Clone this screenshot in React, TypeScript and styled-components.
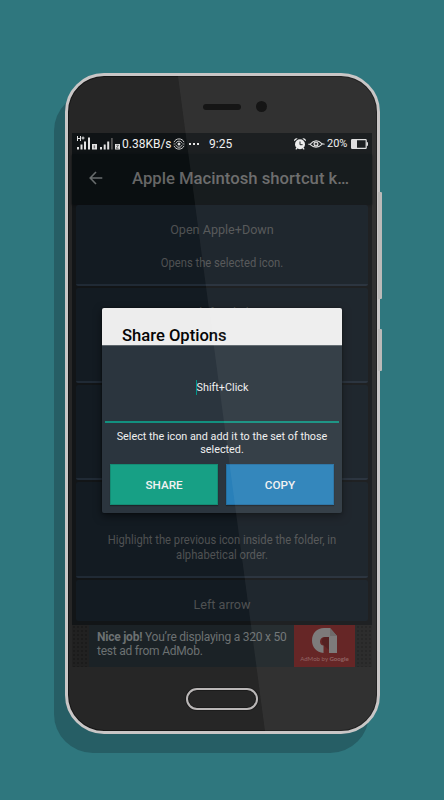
import React, {memo} from 'react';
import styled, {createGlobalStyle} from "styled-components";

type CardType = {
    id: number
    title: string
    text: string
    height: number
}

// cards 2-4 lie mostly behind the dialog
const cards: CardType[] = [
    {id: 1, title: 'Open Apple+Down', text: 'Opens the selected icon.', height: 81},
    {id: 2, title: 'Shift+Click', text: '', height: 95},
    {id: 3, title: '', text: '', height: 95},
    {id: 4, title: '', text: 'Highlight the previous icon inside the folder, in alphabetical order.', height: 96},
    {id: 5, title: 'Left arrow', text: '', height: 41},
]

export default function App() {
    return (
        <Scene>
            <GlobalStyle/>
            <Phone>
                <SideButton top={116} height={107}/>
                <SideButton top={253} height={42}/>
                <Earpiece>
                    <Speaker/>
                    <Camera/>
                </Earpiece>
                <Screen>
                    <StatusBar/>
                    <Toolbar>
                        <BackIcon/>
                        <ToolbarTitle>Apple Macintosh shortcut k…</ToolbarTitle>
                    </Toolbar>
                    <CardList>
                        {cards.map(el => <ShortcutCard key={el.id} {...el}/>)}
                    </CardList>
                    <AdBanner/>
                    <ShareDialog/>
                </Screen>
                <BottomBezel>
                    <HomeButton/>
                </BottomBezel>
                <Sheen/>
            </Phone>
        </Scene>
    );
}

const StatusBar = memo(() => (
    <Status>
        <SignalIcons/>
        <StatusText size={12} width={49}>0.38KB/s</StatusText>
        <HotspotIcon/>
        <Dots><i/><i/><i/></Dots>
        <Clock>9:25</Clock>
        <AlarmIcon/>
        <EyeIcon/>
        <StatusText size={11} width={23}>20%</StatusText>
        <BatteryIcon/>
    </Status>
))

const ShortcutCard = memo((props: CardType) => (
    <Card height={props.height}>
        <CardTitle>{props.title}</CardTitle>
        {props.text && <CardText>{props.text}</CardText>}
    </Card>
))

const ShareDialog = memo(() => (
    <Dialog>
        <DialogHeader>Share Options</DialogHeader>
        <DialogBody>
            <Field><Caret/>Shift+Click</Field>
            <DialogText>Select the icon and add it to the set of those selected.</DialogText>
            <Buttons>
                <Button color="#17a085">SHARE</Button>
                <Button color="#2980b9">COPY</Button>
            </Buttons>
        </DialogBody>
    </Dialog>
))

const AdBanner = memo(() => (
    <Ad>
        <AdText><b>Nice job!</b> You’re displaying a 320 x 50 test ad from AdMob.</AdText>
        <AdLogo>
            <svg width="25" height="25" viewBox="0 0 25 25">
                <path d="M17 9v13l-5.500-5C9 15 9.500 9 13 9z" fill="#4c1515"/>
                <path d="M12 0h6l7 8v17h-8V9h-4c-3 0-5 2-5 4.500 0 2.500 1.500 4 3.500 4V25C4.500 24.500 0 19 0 12.500 0 5 5 0 12 0z"
                      fill="#767474"/>
                <path d="M18 0l7 8h-7z" fill="#676363"/>
            </svg>
            <AdLabel>AdMob by <b>Google</b></AdLabel>
        </AdLogo>
    </Ad>
))

//=========================ICONS===================================

const SignalIcons = () => (
    <svg width="46" height="15" viewBox="0 0 46 15" fill="#e2e2e2">
        <path d="M1 0h1v2h2V0h1v5H4V3H2v2H1zM5.500 1.500h3v1h-3zM6.500 .5h1v3h-1z"/>
        <path d="M1 11h2v2.500H1zM4.500 8.500h2v5h-2zM8 5.500h2v8H8zM12 1.500h2v12h-2z"/>
        <path d="M16 8h5v5.500h-5z"/>
        <path d="M17.700 9.300h1.400v3h-1.400z" fill="#777"/>
        <path d="M24 11h2v2.500h-2zM27.700 8.500h2v5h-2zM31.200 5.500h2v8h-2z"/>
        <path d="M35 2h1.800v11.500H35z" fill="#555"/>
        <path d="M39 8h5v5.500h-5z"/>
        <path d="M40.300 9.300h2.200l-2.200 3h2.200" fill="none" stroke="#333" strokeWidth="0.7"/>
    </svg>
)

const HotspotIcon = () => (
    <HotspotSvg width="12" height="12" viewBox="0 0 12 12" fill="none" stroke="#c9c9c9">
        <path d="M1 4.200C2.500-.2 9.500-.2 11 4.200M3 5.200c.8-2.700 5.200-2.700 6 0M1 7.800c1.500 4.400 8.500 4.400 10 0M3 7.200c.8 2.700 5.200 2.700 6 0"/>
        <path d="M.5 6h2.200M9.300 6h2.200" strokeWidth="0.800"/>
        <circle cx="6" cy="6" r="1.500" fill="#dedede" stroke="none"/>
    </HotspotSvg>
)

const AlarmIcon = () => (
    <AlarmSvg width="12" height="12" viewBox="0 0 12 12">
        <g fill="#ececec">
            <circle cx="6" cy="6.300" r="5"/>
            <path d="M.2 3.300A2.400 2.400 0 0 1 3.700.6zM11.800 3.300A2.400 2.400 0 0 0 8.300.6zM2.500 9.500l1 1-1.300 1.200-.8-.6zM9.500 9.500l-1 1 1.300 1.200.8-.6z"/>
        </g>
        <path d="M6 3.500v3.200h2.600" fill="none" stroke="#1b1f21"/>
    </AlarmSvg>
)

const EyeIcon = () => (
    <EyeSvg width="17" height="8" viewBox="0 0 17 8" fill="none" stroke="#dfdfdf">
        <path d="M.3 4.300H2Q8-2.500 14 3.800L16.600 4.300M2 4.300Q8 10 14 4.300" strokeWidth="1.100"/>
        <circle cx="8" cy="4" r="1.900" strokeWidth="1.200"/>
        <circle cx="8" cy="4" r=".6" fill="#dfdfdf" stroke="none"/>
    </EyeSvg>
)

const BatteryIcon = () => (
    <BatterySvg width="17" height="10" viewBox="0 0 17 10">
        <rect x=".6" y=".6" width="14.600" height="8.800" rx=".6" fill="none" stroke="#dedede" strokeWidth="1.200"/>
        <path d="M1 1h5v8H1zM15.500 3.300H17v3.400h-1.500z" fill="#dedede"/>
    </BatterySvg>
)

const BackIcon = () => (
    <svg width="14" height="14" viewBox="0 0 14 14" fill="none" stroke="#686c6d" strokeWidth="1.600">
        <path d="M13.300 7H1.500M7 1L1.200 7 7 13"/>
    </svg>
)

//=========================PHONE===================================

const GlobalStyle = createGlobalStyle`
  body {
    margin: 0;
    background-color: #2f777e;
    font-family: Roboto, "Liberation Sans", sans-serif;
  }

  * {
    box-sizing: border-box;
  }
`

const Scene = styled.div`
  width: 444px;
  height: 800px;
  padding: 73px 0 0 65px;
  overflow: hidden;
  background-color: #2f777e;
`

const Phone = styled.div`
  position: relative;
  width: 315px;
  height: 661px;
  border: 3px solid #c9c6c6;
  border-radius: 39px;
  background-color: #262626;
  box-shadow: -11px 19px 0 #265e65, inset 0 0 0 1px #161616;
`

const SideButton = styled.div<{ top: number, height: number }>`
  position: absolute;
  left: 310px;
  top: ${props => props.top}px;
  width: 4px;
  height: ${props => props.height}px;
  border-radius: 0 1px 1px 0;
  background-color: #bcbab9;
`

const Earpiece = styled.div`
  display: flex;
  align-items: center;
  gap: 15px;
  height: 57px;
  padding: 4px 0 0 135px;
`

const Speaker = styled.div`
  width: 38px;
  height: 6px;
  border-radius: 3px;
  background-color: #080808;
`

const Camera = styled.div`
  width: 11px;
  height: 11px;
  border-radius: 50%;
  background-color: #080808;
`

const Screen = styled.div`
  position: relative;
  display: flex;
  flex-direction: column;
  width: 300px;
  height: 534px;
  margin-left: 4px;
  background-color: #121517;
`

const BottomBezel = styled.div`
  display: flex;
  justify-content: center;
  padding: 21px 2px 0 0;
`

const HomeButton = styled.div`
  width: 72px;
  height: 22px;
  border: 2px solid #bab7b7;
  border-radius: 11px;
  box-shadow: 0 0 0 1px #1d1d1d, inset 0 0 0 1px #1b1b1b;
`

// diagonal glass reflection over the whole front panel
const Sheen = styled.div`
  position: absolute;
  inset: 0;
  border-radius: 36px;
  background-color: rgba(255, 255, 255, 0.055);
  clip-path: polygon(110px 0, 100% 0, 100% 100%, 197px 100%);
  pointer-events: none;
`

//=========================STATUS==================================

const Status = styled.div`
  display: flex;
  align-items: center;
  height: 21px;
  padding-left: 4px;
  color: #f0f0f0;
  background-color: #0f1315;
`

const StatusText = styled.span<{ size: number, width: number }>`
  width: ${props => props.width}px;
  font-size: ${props => props.size}px;
  white-space: nowrap;
`

const HotspotSvg = styled.svg`
  margin-left: 2px;
`

const AlarmSvg = styled.svg`
  margin-left: 62px;
`

const EyeSvg = styled.svg`
  margin: 0 2px;
`

const BatterySvg = styled.svg`
  margin-left: 1px;
`

const Dots = styled.div`
  display: flex;
  gap: 2px;
  margin-left: 4px;

  i {
    width: 2px;
    height: 2px;
    background-color: #e4e4e4;
  }
`

const Clock = styled.span`
  width: 23px;
  margin-left: 10px;
  font-size: 12px;
`

//=========================TOOLBAR=================================

const Toolbar = styled.div`
  display: flex;
  align-items: center;
  gap: 29px;
  height: 50px;
  padding: 0 0 2px 17px;
  background-color: #0a0f11;
  box-shadow: 0 1px 2px #0a0d0f;
`

const ToolbarTitle = styled.div`
  padding-top: 1px;
  color: #666;
  font-size: 16.700px;
  font-weight: 500;
  white-space: nowrap;
`

//=========================CARDS===================================

const CardList = styled.div`
  display: flex;
  flex-direction: column;
  gap: 2px;
  height: 421px;
  padding: 1px 4px 0;
  overflow: hidden;
`

const Card = styled.div<{ height: number }>`
  display: flex;
  flex-direction: column;
  align-items: center;
  flex-shrink: 0;
  height: ${props => props.height}px;
  padding-top: 17px;
  border-bottom: ${props => props.height > 50 ? '2px solid #202a35' : 'none'};
  border-radius: 2px;
  background-color: #131b22;
`

const CardTitle = styled.div`
  height: 16px;
  color: #4f5152;
  font-size: 12.600px;
  line-height: 16px;
`

const CardText = styled.div`
  width: 290px;
  margin-top: 17px;
  color: #4f5152;
  font-size: 13.500px;
  line-height: 15px;
  text-align: center;
  transform: scaleX(0.83);
`

//=========================AD======================================

const Ad = styled.div`
  display: flex;
  height: 42px;
  padding: 0 17px;
  background: radial-gradient(circle at 2px 2px, #1b1b1b 1px, transparent 1.500px) 0 0 / 4px 4px, #212121;
`

const AdText = styled.div`
  width: 205px;
  padding: 5px 0 0 8px;
  color: #6c7172;
  background-color: #1b2226;
  font-size: 12px;
  letter-spacing: -0.230px;
  line-height: 14px;
`

const AdLogo = styled.div`
  display: flex;
  flex-direction: column;
  align-items: center;
  width: 61px;
  padding-top: 3px;
  background-color: #5e1a1a;
`

const AdLabel = styled.div`
  margin-top: 2px;
  color: #8b5c5c;
  font-family: Lato, sans-serif;
  font-size: 6.100px;
  line-height: 8px;
  white-space: nowrap;
`

//=========================DIALOG==================================

const Dialog = styled.div`
  position: absolute;
  left: 30px;
  top: 175px;
  width: 240px;
  height: 205px;
  border-radius: 2px;
  overflow: hidden;
  box-shadow: 0 3px 8px rgba(0, 0, 0, 0.5), 0 0 2px rgba(0, 0, 0, 0.6);
`

const DialogHeader = styled.div`
  height: 37px;
  padding: 17px 0 0 20px;
  overflow: hidden;
  color: #050505;
  background-color: #ededed;
  font-size: 16.600px;
  font-weight: 500;
  line-height: 21px;
`

const DialogBody = styled.div`
  display: flex;
  flex-direction: column;
  height: 168px;
  padding: 0 3px;
  border-top: 1px solid #5c656b;
  color: #f0f0f0;
  background-color: #2b353e;
  font-size: 10.800px;
`

const Field = styled.div`
  display: flex;
  align-items: center;
  justify-content: center;
  height: 77px;
  padding-top: 7px;
  border-bottom: 2px solid #12907f;
`

const Caret = styled.span`
  width: 1px;
  height: 15px;
  background-color: #009688;
`

const DialogText = styled.div`
  padding: 7px 8px 0;
  line-height: 13px;
  text-align: center;
`

const Buttons = styled.div`
  display: flex;
  gap: 8px;
  padding: 8px 5px 0;
`

const Button = styled.button<{ color: string }>`
  width: 108px;
  height: 41px;
  padding: 0;
  border: 1px solid rgba(0, 0, 0, 0.12);
  color: #f2f2f2;
  background-color: ${props => props.color};
  box-shadow: 0 1px 1px rgba(0, 0, 0, 0.3);
  font-family: inherit;
  font-size: 11.700px;
  font-weight: 500;
`
//=========================/////===================================
